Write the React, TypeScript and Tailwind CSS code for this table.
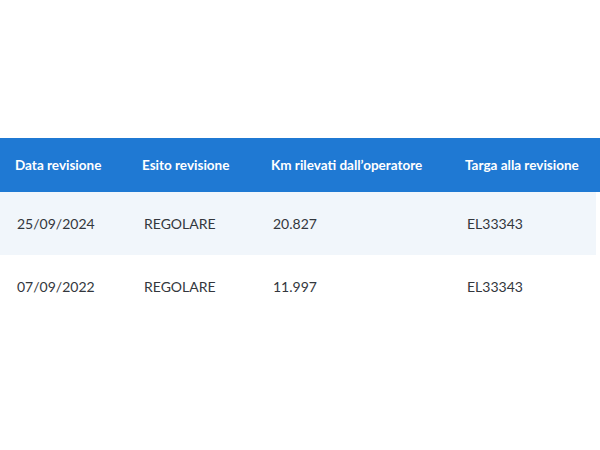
const rows = [
  { data: '25/09/2024', esito: 'REGOLARE', km: '20.827', targa: 'EL33343' },
  { data: '07/09/2022', esito: 'REGOLARE', km: '11.997', targa: 'EL33343' },
];

const cols = 'grid grid-cols-[127px_129px_194px_1fr] items-center';

export default function App() {
  return (
    <div className="w-[600px] h-[450px] bg-white pt-[138px]" style={{ fontFamily: 'Lato, "Open Sans", sans-serif' }}>
      <div className={`${cols} h-[54px] bg-[#1f79d3] text-white text-[13.5px] font-bold pl-[15px]`}>
        <div>Data revisione</div>
        <div>Esito revisione</div>
        <div>Km rilevati dall’operatore</div>
        <div>Targa alla revisione</div>
      </div>
      {rows.map((r, i) => (
        <div
          key={i}
          className={`${cols} h-[63px] pl-[17px] text-[14px] text-[#33373d] ${i === 0 ? 'bg-[#f1f6fb] mr-[4px]' : ''}`}
        >
          <div>{r.data}</div>
          <div>{r.esito}</div>
          <div>{r.km}</div>
          <div>{r.targa}</div>
        </div>
      ))}
    </div>
  );
}
